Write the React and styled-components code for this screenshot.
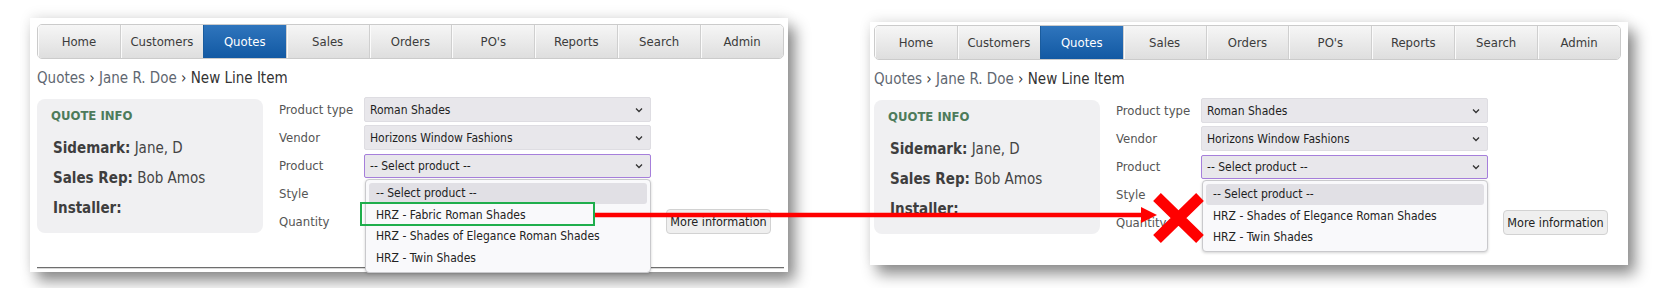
import styled, { createGlobalStyle } from "styled-components";

const Global = createGlobalStyle`
  body {
    margin: 0;
    background: #fff;
    font-family: Tahoma, "DejaVu Sans Condensed", "DejaVu Sans", sans-serif;
  }
`;

const Stage = styled.div`
  position: relative;
  width: 1654px;
  height: 288px;
  display: flex;
  align-items: flex-start;
  overflow: hidden;
`;

const Panel = styled.div`
  position: relative;
  box-sizing: border-box;
  width: 758px;
  height: ${(p) => p.$height}px;
  margin-left: ${(p) => p.$left}px;
  margin-top: ${(p) => p.$top}px;
  padding: ${(p) => p.$pad};
  background: #fff;
  display: flex;
  flex-direction: column;
  box-shadow: 0 -3px 12px rgba(0, 0, 0, 0.07), 7px 9px 14px rgba(0, 0, 0, 0.45);
`;

const Nav = styled.div`
  display: flex;
  height: 35px;
  box-sizing: border-box;
  width: 747px;
  border: 1px solid #cbcbcb;
  border-radius: 5px;
  overflow: hidden;
`;

const Tab = styled.div`
  flex: 1;
  display: flex;
  align-items: center;
  justify-content: center;
  font-size: 13px;
  color: ${(p) => (p.$active ? "#fff" : "#3b3b3b")};
  background: ${(p) =>
    p.$active
      ? "linear-gradient(#2f75bd, #1259a3)"
      : "linear-gradient(#f6f6f6, #dedede)"};
  border-left: 1px solid ${(p) => (p.$active ? "#1a5c9e" : "#cfcfcf")};
  box-shadow: inset 1px 0 0 ${(p) => (p.$active ? "transparent" : "#fbfbfb")};
  &:first-child {
    border-left: none;
  }
`;

const Crumbs = styled.div`
  margin-top: 9px;
  font-size: 15px;
  line-height: 20px;
  color: #333;
  span {
    color: #5f6771;
  }
`;

const Content = styled.div`
  display: flex;
  gap: 16px;
  margin-top: 9px;
`;

const InfoBox = styled.div`
  box-sizing: border-box;
  width: 226px;
  height: 134px;
  margin-top: 2px;
  padding: 8px 14px;
  background: #f0f0f2;
  border-radius: 8px;
`;

const InfoTitle = styled.div`
  font-size: 13px;
  font-weight: bold;
  line-height: 18px;
  color: #4d7b5b;
  margin-bottom: 8px;
`;

const InfoRow = styled.div`
  padding-left: 2px;
  font-size: 15px;
  line-height: 30px;
  color: #444;
  b {
    color: #3e3e3e;
  }
`;

const Form = styled.div`
  display: grid;
  grid-template-columns: 85px 287px auto;
  grid-auto-rows: 25px;
  row-gap: 3px;
  align-items: center;
`;

const Label = styled.div`
  font-size: 13px;
  color: #555;
`;

const SelectBox = styled.div`
  position: relative;
  box-sizing: border-box;
  height: ${(p) => (p.$focus ? 24 : 25)}px;
  display: flex;
  align-items: center;
  padding: 0 5px;
  font-size: 12px;
  color: #1e1e1e;
  background: #e8e7eb;
  border: ${(p) => (p.$focus ? "1.5px solid #a67fdb" : "1px solid #dedde2")};
  border-radius: 2px;
  svg.chev {
    position: absolute;
    right: 7px;
    top: 50%;
    margin-top: -3px;
  }
`;

const Dropdown = styled.div`
  position: absolute;
  z-index: 2;
  left: 0;
  top: calc(100% + 2px);
  box-sizing: border-box;
  width: 286px;
  padding: 3px;
  background: #f9f9fb;
  border: 1px solid #c9c9cc;
  border-radius: 4px;
  box-shadow: 0 1px 3px rgba(0, 0, 0, 0.18);
`;

const Option = styled.div`
  height: 21.5px;
  display: flex;
  align-items: center;
  padding: 0 7px;
  font-size: 12px;
  color: #222;
  border-radius: 3px;
  background: ${(p) => (p.$selected ? "#e1e0e5" : "transparent")};
`;

const MoreButton = styled.div`
  margin-left: 15px;
  box-sizing: border-box;
  width: 105px;
  height: 25px;
  display: flex;
  align-items: center;
  justify-content: center;
  font-size: 12.5px;
  color: #222;
  background: #efefef;
  border: 1px solid #d2d2d2;
  border-radius: 4px;
`;

const Rule = styled.div`
  margin-top: 33px;
  width: 747px;
  border-top: 1px solid #6e6e6e;
  border-bottom: 1px solid #d8d8d8;
`;

const GreenBox = styled.div`
  position: absolute;
  z-index: 3;
  left: 360px;
  top: 202px;
  width: 235px;
  height: 24px;
  box-sizing: border-box;
  border: 2px solid #1fae4c;
`;

const Overlay = styled.svg`
  position: absolute;
  z-index: 3;
  left: ${(p) => p.$x}px;
  top: ${(p) => p.$y}px;
`;

const tabs = ["Home", "Customers", "Quotes", "Sales", "Orders", "PO's", "Reports", "Search", "Admin"];

const Chevron = () => (
  <svg className="chev" width="8" height="6" viewBox="0 0 8 6">
    <path d="M1 1.5 L4 4.5 L7 1.5" fill="none" stroke="#333" strokeWidth="1.3" />
  </svg>
);

const Screen = ({ options, rule, ...panel }) => (
  <Panel {...panel}>
    <Nav>
      {tabs.map((t) => (
        <Tab key={t} $active={t === "Quotes"}>
          {t}
        </Tab>
      ))}
    </Nav>
    <Crumbs>
      <span>Quotes</span> › <span>Jane R. Doe</span> › New Line Item
    </Crumbs>
    <Content>
      <InfoBox>
        <InfoTitle>QUOTE INFO</InfoTitle>
        <InfoRow>
          <b>Sidemark:</b> Jane, D
        </InfoRow>
        <InfoRow>
          <b>Sales Rep:</b> Bob Amos
        </InfoRow>
        <InfoRow>
          <b>Installer:</b>
        </InfoRow>
      </InfoBox>
      <Form>
        <Label>Product type</Label>
        <SelectBox>
          Roman Shades
          <Chevron />
        </SelectBox>
        <div />
        <Label>Vendor</Label>
        <SelectBox>
          Horizons Window Fashions
          <Chevron />
        </SelectBox>
        <div />
        <Label>Product</Label>
        <SelectBox $focus>
          -- Select product --
          <Chevron />
          <Dropdown>
            <Option $selected>-- Select product --</Option>
            {options.map((o) => (
              <Option key={o}>{o}</Option>
            ))}
          </Dropdown>
        </SelectBox>
        <div />
        <Label>Style</Label>
        <div />
        <div />
        <Label>Quantity</Label>
        <div />
        <MoreButton>More information</MoreButton>
      </Form>
    </Content>
    {rule && <Rule />}
  </Panel>
);

export default function App() {
  return (
    <>
      <Global />
      <Stage>
        <Screen
          $left={30}
          $top={18}
          $height={254}
          $pad="6px 4px 0 7px"
          rule
          options={[
            "HRZ - Fabric Roman Shades",
            "HRZ - Shades of Elegance Roman Shades",
            "HRZ - Twin Shades",
          ]}
        />
        <Screen
          $left={82}
          $top={22}
          $height={243}
          $pad="3px 7px 0 4px"
          options={["HRZ - Shades of Elegance Roman Shades", "HRZ - Twin Shades"]}
        />
        <GreenBox />
        <Overlay $x={595} $y={205} width="562" height="20" viewBox="0 0 562 20">
          <line x1="0" y1="10" x2="549" y2="10" stroke="#ff0000" strokeWidth="4.5" />
          <polygon points="546,2 562,10 546,18" fill="#ff0000" />
        </Overlay>
        <Overlay $x={1153} $y={193} width="51" height="50" viewBox="0 0 51 50">
          <path d="M4 4 L47 46 M47 4 L4 46" stroke="#ff0000" strokeWidth="11" />
        </Overlay>
      </Stage>
    </>
  );
}
